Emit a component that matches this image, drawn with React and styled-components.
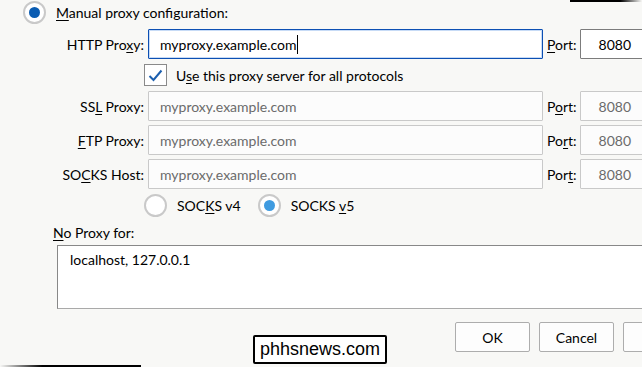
import React from 'react';
import styled, { createGlobalStyle } from 'styled-components';

const GlobalStyle = createGlobalStyle`
  html, body {
    margin: 0;
    padding: 0;
    background: #f8f8f6;
    overflow: hidden;
  }
`;

const Dialog = styled.div`
  position: relative;
  width: 642px;
  height: 367px;
  overflow: hidden;
  background: #f8f8f6;
  font-family: Lato, "Open Sans", sans-serif;
  font-size: 14px;
  color: #000;
`;

const EdgeLine = styled.div`
  position: absolute;
  height: 2px;
  ${(p) => (p.$top ? 'top: 0; right: 0; width: 72px;' : 'bottom: 0; left: 0; width: 141px;')}
  background: linear-gradient(${(p) => (p.$top ? 'to right' : 'to left')}, #000 0%, #000 70%, rgba(0,0,0,0) 100%);
`;

const Key = styled.span`
  text-decoration: underline;
  text-underline-offset: 2px;
`;

const RadioLine = styled.label`
  display: flex;
  align-items: center;
  gap: ${(p) => p.$gap || 10}px;
  height: 24px;
  white-space: nowrap;
`;

const RadioCircle = styled.span`
  box-sizing: border-box;
  width: 23px;
  height: 23px;
  border-radius: 50%;
  border: 2px solid #c9c9c9;
  background: #fff;
  display: flex;
  align-items: center;
  justify-content: center;
  flex-shrink: 0;
  &::after {
    content: '';
    display: ${(p) => (p.$checked ? 'block' : 'none')};
    width: 11px;
    height: 11px;
    border-radius: 50%;
    background: ${(p) => p.$dot || '#0a5cb2'};
  }
`;

const Header = styled.div`
  padding: 0 0 0 23px;
  height: 24px;
`;

const Grid = styled.div`
  display: grid;
  grid-template-columns: 148px 395px 37px 90px;
  row-gap: 4px;
  margin-top: 5px;
`;

const Label = styled.div`
  display: flex;
  align-items: center;
  justify-content: flex-end;
  padding-right: 4px;
  white-space: nowrap;
`;

const PortLabel = styled.div`
  display: flex;
  align-items: center;
  padding-left: 4px;
  white-space: nowrap;
`;

const Field = styled.div`
  box-sizing: border-box;
  height: 30px;
  display: flex;
  align-items: center;
  justify-content: ${(p) => (p.$right ? 'flex-end' : 'flex-start')};
  padding: ${(p) => (p.$right ? '0 38px 0 0' : '0 0 0 11px')};
  background: ${(p) => (p.$disabled ? '#fcfcfc' : '#fff')};
  border: 1px solid ${(p) => (p.$focus ? '#0c4fb3' : p.$disabled ? '#c9c9c9' : '#7c7c7c')};
  box-shadow: ${(p) => (p.$focus ? 'inset 0 0 0 1px rgba(30,110,220,0.25)' : 'none')};
  border-radius: 1px;
  color: ${(p) => (p.$disabled ? '#6b6b6b' : '#000')};
  white-space: nowrap;
`;

const Caret = styled.span`
  display: inline-block;
  width: 1px;
  height: 19px;
  background: #000;
  margin-left: 1px;
`;

const CheckRow = styled.label`
  grid-column: 2 / 5;
  display: flex;
  align-items: center;
  gap: 9px;
  height: 24px;
  margin-left: -4px;
  white-space: nowrap;
`;

const CheckBox = styled.span`
  box-sizing: border-box;
  width: 23px;
  height: 22px;
  border: 1px solid #8a8a8a;
  background: #fff;
  display: flex;
  align-items: center;
  justify-content: center;
`;

const SocksRow = styled.div`
  grid-column: 2 / 5;
  display: flex;
  align-items: center;
  gap: 17px;
  margin: 0 0 0 -4px;
`;

const NoProxyLabel = styled.div`
  padding-left: 53px;
  margin-top: 6px;
  height: 20px;
  line-height: 20px;
`;

const TextArea = styled.div`
  box-sizing: border-box;
  margin: 2px 0 0 57px;
  width: 620px;
  height: 64px;
  background: #fff;
  border: 1px solid #a9a9a9;
  border-top-color: #888;
  border-left-color: #888;
  padding: 5px 12px;
`;

const ButtonRow = styled.div`
  display: flex;
  gap: 9px;
  margin: 13px 0 0 455px;
`;

const Button = styled.div`
  box-sizing: border-box;
  width: 75px;
  height: 30px;
  flex-shrink: 0;
  display: flex;
  align-items: center;
  justify-content: center;
  background: #fdfdfd;
  border: 1px solid #adadad;
  border-radius: 2px;
`;

const Watermark = styled.div`
  position: absolute;
  left: 253px;
  top: 335px;
  box-sizing: border-box;
  width: 134px;
  height: 29px;
  background: #fff;
  border: 2px solid #000;
  border-radius: 2px;
  display: flex;
  align-items: center;
  justify-content: center;
  font-family: "Liberation Sans", Arial, sans-serif;
  font-size: 18px;
  color: #000;
`;

const rows = [
  { label: <>SS<Key>L</Key> Proxy:</>, port: <>P<Key>o</Key>rt:</> },
  { label: <><Key>F</Key>TP Proxy:</>, port: <>Po<Key>r</Key>t:</> },
  { label: <>SO<Key>C</Key>KS Host:</>, port: <>Por<Key>t</Key>:</> },
];

const App = () => (
  <Dialog>
    <GlobalStyle />
    <EdgeLine $top />
    <Header>
      <RadioLine $gap={10}>
        <RadioCircle $checked />
        <span><Key>M</Key>anual proxy configuration:</span>
      </RadioLine>
    </Header>
    <Grid>
      <Label><span>HTTP Pro<Key>x</Key>y:</span></Label>
      <Field $focus><span>myproxy.example.com</span><Caret /></Field>
      <PortLabel><span><Key>P</Key>ort:</span></PortLabel>
      <Field $right>8080</Field>

      <div />
      <CheckRow>
        <CheckBox>
          <svg width="15" height="13" viewBox="0 0 15 13">
            <path d="M1.5 7 L5.5 11 L13.5 1.5" fill="none" stroke="#1c5fae" strokeWidth="2" />
          </svg>
        </CheckBox>
        <span>U<Key>s</Key>e this proxy server for all protocols</span>
      </CheckRow>

      {rows.map((r, i) => (
        <React.Fragment key={i}>
          <Label><span>{r.label}</span></Label>
          <Field $disabled>myproxy.example.com</Field>
          <PortLabel><span>{r.port}</span></PortLabel>
          <Field $disabled $right>8080</Field>
        </React.Fragment>
      ))}

      <div />
      <SocksRow>
        <RadioLine $gap={10}>
          <RadioCircle />
          <span>SOC<Key>K</Key>S v4</span>
        </RadioLine>
        <RadioLine $gap={10}>
          <RadioCircle $checked $dot="#3f9be0" />
          <span>SOCKS <Key>v</Key>5</span>
        </RadioLine>
      </SocksRow>
    </Grid>
    <NoProxyLabel><Key>N</Key>o Proxy for:</NoProxyLabel>
    <TextArea>localhost, 127.0.0.1</TextArea>
    <ButtonRow>
      <Button>OK</Button>
      <Button>Cancel</Button>
      <Button />
    </ButtonRow>
    <Watermark>phhsnews.com</Watermark>
    <EdgeLine />
  </Dialog>
);

export default App;
